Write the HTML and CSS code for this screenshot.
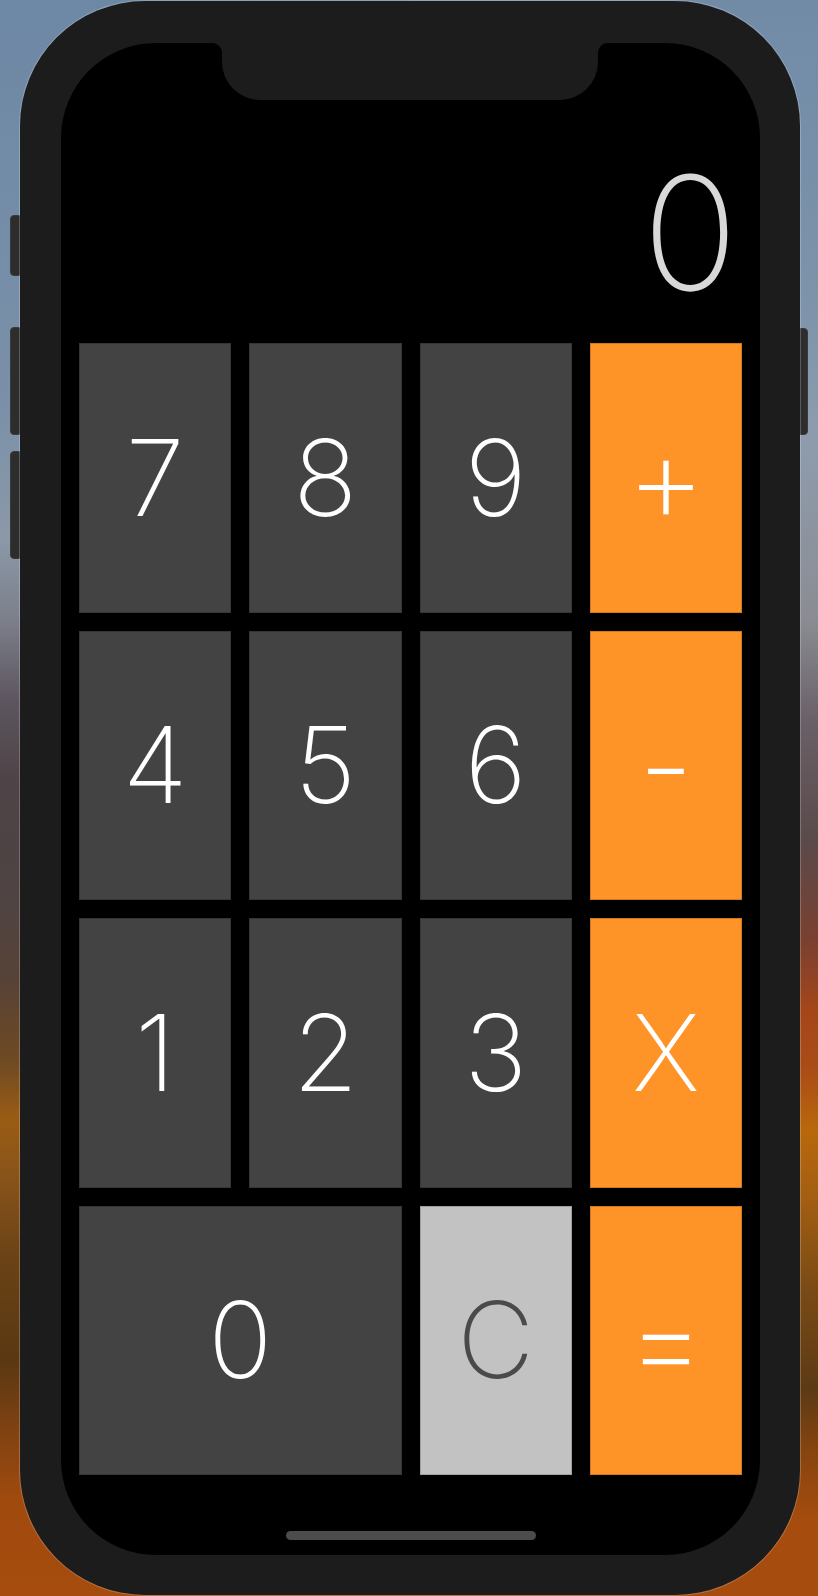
FILE: index.html
```html
<!DOCTYPE html>
<html lang="en">
<head>
<meta charset="utf-8">
<title>Calculator</title>
<link rel="stylesheet" href="styles.css">
</head>
<body>
  <div class="phone">
    <span class="side-btn side-left mute"></span>
    <span class="side-btn side-left vol-up"></span>
    <span class="side-btn side-left vol-down"></span>
    <span class="side-btn side-right power"></span>
    <div class="screen">
      <div class="notch"></div>
      <div class="display"><span class="result">0</span></div>
      <div class="keypad">
        <button class="key num">7</button>
        <button class="key num">8</button>
        <button class="key num">9</button>
        <button class="key op sym">+</button>
        <button class="key num">4</button>
        <button class="key num">5</button>
        <button class="key num">6</button>
        <button class="key op sym">-</button>
        <button class="key num">1</button>
        <button class="key num">2</button>
        <button class="key num">3</button>
        <button class="key op">X</button>
        <button class="key num wide">0</button>
        <button class="key clear">C</button>
        <button class="key op sym">=</button>
      </div>
      <div class="home-area"><span class="home-indicator"></span></div>
    </div>
  </div>
</body>
</html>
```

FILE: styles.css
```css
* { box-sizing: border-box; }

html, body {
  margin: 0;
  padding: 0;
  width: 818px;
  height: 1596px;
  overflow: hidden;
}

body {
  font-family: "Inter", "Roboto", "Liberation Sans", sans-serif;
  background:
    linear-gradient(180deg,
      #6d88a5 0px, #7a90a8 400px, #8b98a8 540px, #7c7f8a 620px,
      #5d5660 700px, #4e4346 780px, #4f4443 900px, #574236 980px,
      #6e4a24 1060px, #9a5c14 1120px, #87531a 1180px, #6a4216 1260px,
      #5a3812 1360px, #7f4212 1430px, #a14a0e 1500px, #a54c0e 1596px) left top / 50% 100% no-repeat,
    linear-gradient(180deg,
      #718ba7 0px, #7d93aa 300px, #8e9cad 440px, #8b8c93 620px,
      #6a6068 720px, #5a4a4a 840px, #7a4030 940px, #a4461a 1010px,
      #aa4c16 1070px, #b8680c 1130px, #a25e12 1200px, #7a4a15 1290px,
      #5c3a14 1390px, #86440f 1450px, #a54c0e 1520px, #a54c0e 1596px) right top / 50% 100% no-repeat;
}

.phone {
  position: relative;
  width: 780px;
  height: 1594px;
  margin: 1px 0 0 20px;
  padding: 42px 40px 40px 41px;
  background: #1c1c1c;
  border-radius: 125px;
  box-shadow: 0 0 0 1px rgba(255, 255, 255, 0.22);
}

.side-btn {
  position: absolute;
  width: 12px;
  background: #2d2d2d;
  border: 1px solid #3a3a3a;
  border-radius: 4px;
  z-index: -1;
}
.side-left { left: -10px; }
.side-right { right: -8px; }
.mute { top: 214px; height: 61px; }
.vol-up { top: 326px; height: 108px; }
.vol-down { top: 450px; height: 108px; }
.power { top: 327px; height: 107px; }

.screen {
  position: relative;
  height: 100%;
  background: #000;
  border-radius: 95px;
  padding: 0 18px;
  display: flex;
  flex-direction: column;
}

.notch {
  position: absolute;
  top: 0;
  left: 161px;
  width: 376px;
  height: 57px;
  background: #1c1c1c;
  border-radius: 0 0 38px 38px;
}
.notch::before,
.notch::after {
  content: "";
  position: absolute;
  top: 0;
  width: 10px;
  height: 10px;
}
.notch::before {
  left: -10px;
  background: radial-gradient(circle at 0 100%, transparent 9.5px, #1c1c1c 10.5px);
}
.notch::after {
  right: -10px;
  background: radial-gradient(circle at 100% 100%, transparent 9.5px, #1c1c1c 10.5px);
}

.display {
  height: 282px;
  flex: none;
  display: flex;
  align-items: flex-end;
  justify-content: flex-end;
  padding-bottom: 13px;
  padding-right: 4px;
}
.result {
  font-size: 158px;
  font-weight: 160;
  line-height: 1;
  color: #d8d8d8;
}

.keypad {
  margin-top: 18px;
  flex: none;
  height: 1132px;
  display: grid;
  grid-template-columns: repeat(4, 1fr);
  grid-template-rows: repeat(4, 1fr);
  gap: 18px;
}

.key {
  border: 0;
  margin: 0;
  padding: 0;
  font-family: inherit;
  font-size: 106px;
  font-weight: 180;
  line-height: 1;
  color: #fff;
  display: flex;
  align-items: center;
  justify-content: center;
  box-shadow: inset 0 0 0 1px rgba(0, 0, 0, 0.18);
}
.num { background: #434343; }
.op { background: #fe9428; }
.sym { font-size: 124px; }
.clear { background: #c2c2c2; color: #4a4a4a; }
.wide { grid-column: span 2; }

.home-area {
  flex: 1;
  display: flex;
  justify-content: center;
  padding-top: 56px;
}
.home-indicator {
  width: 250px;
  height: 9px;
  border-radius: 5px;
  background: #4c4c4c;
}
```
